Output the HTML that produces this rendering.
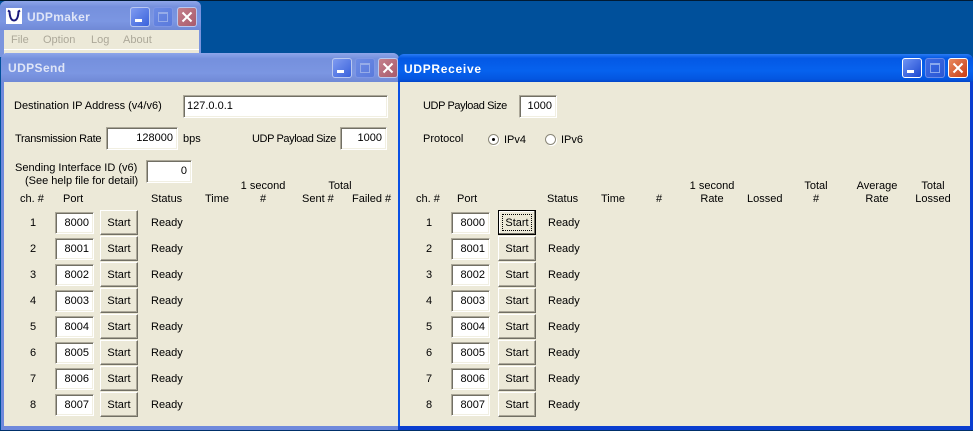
<!DOCTYPE html>
<html><head><meta charset="utf-8">
<style>
html,body{margin:0;padding:0;width:973px;height:431px;overflow:hidden;background:#00509b}
body{position:relative;font:11px/13px "Liberation Sans",sans-serif;color:#000}
div,span{position:absolute;box-sizing:border-box}
span{white-space:nowrap;margin-top:4px}
.c{transform:translateX(-50%)}
.in{background:#fff;border:1px solid;border-color:#aca899 #fff #fff #aca899;box-shadow:inset 1px 1px 0 #716f64,inset -1px -1px 0 #f1efe2;text-align:right;padding:3px 4px 0 0;line-height:14px}
.p{width:39px;height:22px;font-size:11px}
.b{width:38px;height:25px;background:#ece9d8;border:1px solid;border-color:#fff #716f64 #716f64 #fff;box-shadow:inset -1px -1px 0 #aca899;text-align:center;line-height:25px}
.t{color:#fff;font-weight:bold;font-size:12px;line-height:14px;margin-top:0}
.m{color:#aca899;margin-top:1px}
.u{letter-spacing:-.4px}
.wb{width:20px;height:20px;border:1px solid #fff;border-radius:3px}
.ia{border-color:#b9c8f0}
.min{background:linear-gradient(135deg,#7f9bf0,#3a62dc)}
.max{background:linear-gradient(135deg,#6c8be4,#5a7adc);border-color:#7e96e4}
.cl{background:linear-gradient(135deg,#c4808c,#a85a6c)}
.amin{background:linear-gradient(135deg,#6f94f4,#1c48d0)}
.amax{background:linear-gradient(135deg,#3d6ae4,#2b58d4);border-color:#6a8ce8}
.acl{background:linear-gradient(135deg,#e88a60,#c83c14)}
.r{width:11px;height:11px;border-radius:50%;background:#fff;border:1px solid #8a8778;box-shadow:1px 1px 0 #fff}
</style></head><body>
<div style="left:0;top:0;width:973px;height:1px;background:#001a33"></div>

<!-- UDPmaker -->
<div style="left:0;top:1px;width:201px;height:56px;background:#7b95de;border-radius:6px 6px 0 0"></div>
<div style="left:0;top:1px;width:201px;height:29px;background:linear-gradient(180deg,#8ea6ea 0,#7590dd 20%,#7b96e2 70%,#7089d6 100%);border-radius:6px 6px 0 0"></div>
<div style="left:4px;top:30px;width:195px;height:24px;background:#ece9d8"></div>
<div style="left:4px;top:49px;width:195px;height:1px;background:#fff"></div>
<div style="left:6px;top:8px;width:16px;height:16px;background:#fff"></div>
<svg style="position:absolute;left:6px;top:8px" width="16" height="16"><path d="M2 2.500 L3.500 3.500 Q4 12.500 8 12.500 Q12 12.500 12.500 3.500 L14 2.500" fill="none" stroke="#1a1a7c" stroke-width="2"/></svg>
<span class="t" style="left:27px;top:10px;color:#dfe5f7;letter-spacing:.3px">UDPmaker</span>
<span class="m" style="left:11px;top:33px">File</span>
<span class="m" style="left:43px;top:33px">Option</span>
<span class="m" style="left:91px;top:33px">Log</span>
<span class="m" style="left:123px;top:33px">About</span>
<div class="wb ia min" style="left:130px;top:7px"><div style="left:4px;top:11px;width:7px;height:3px;background:#fff"></div></div>
<div class="wb ia max" style="left:153px;top:7px"><div style="left:4px;top:4px;width:10px;height:10px;border:1px solid #96ace8;border-top-width:2px"></div></div>
<div class="wb ia cl" style="left:177px;top:7px"><svg style="position:absolute;left:3px;top:3px" width="12" height="12"><path d="M1.500 1.500L10.500 10.500M10.500 1.500L1.500 10.500" stroke="#fff" stroke-width="2"/></svg></div>

<!-- UDPSend window -->
<div style="left:1px;top:53px;width:398px;height:377px;background:#6f89dc;border-radius:6px 6px 0 0"></div>
<div style="left:1px;top:53px;width:398px;height:29px;background:linear-gradient(180deg,#8ea6ea 0,#7590dd 20%,#7b96e2 70%,#7089d6 100%);border-radius:6px 6px 0 0"></div>
<div style="left:4px;top:82px;width:394px;height:344px;background:#ece9d8"></div>
<span class="t" style="left:8px;top:61px;color:#dfe5f7;letter-spacing:.4px">UDPSend</span>
<div class="wb ia min" style="left:332px;top:58px"><div style="left:4px;top:11px;width:7px;height:3px;background:#fff"></div></div>
<div class="wb ia max" style="left:355px;top:58px"><div style="left:4px;top:4px;width:10px;height:10px;border:1px solid #96ace8;border-top-width:2px"></div></div>
<div class="wb ia cl" style="left:378px;top:58px"><svg style="position:absolute;left:3px;top:3px" width="12" height="12"><path d="M1.500 1.500L10.500 10.500M10.500 1.500L1.500 10.500" stroke="#fff" stroke-width="2"/></svg></div>

<span style="left:14px;top:96px">Destination IP Address (v4/v6)</span>
<div class="in" style="left:183px;top:95px;width:205px;height:23px;text-align:left;padding:3px 0 0 3px">127.0.0.1</div>
<span class="u" style="left:15px;top:129px;letter-spacing:-.3px">Transmission Rate</span>
<div class="in" style="left:106px;top:127px;width:72px;height:23px">128000</div>
<span style="left:183px;top:129px">bps</span>
<span class="u" style="left:252px;top:129px">UDP Payload Size</span>
<div class="in" style="left:340px;top:127px;width:47px;height:23px">1000</div>
<span style="left:15px;top:158px">Sending Interface ID (v6)</span>
<span style="left:25px;top:171px">(See help file for detail)</span>
<div class="in" style="left:146px;top:160px;width:46px;height:23px">0</div>

<span style="left:20px;top:189px">ch. #</span>
<span style="left:63px;top:189px">Port</span>
<span style="left:151px;top:189px">Status</span>
<span style="left:205px;top:189px">Time</span>
<span class="c" style="left:263px;top:176px">1 second</span>
<span class="c" style="left:263px;top:189px">#</span>
<span class="c" style="left:340px;top:176px">Total</span>
<span style="left:302px;top:189px">Sent #</span>
<span style="left:352px;top:189px">Failed #</span>

<span class="c" style="left:33px;top:213px">1</span><div class="in p" style="left:55px;top:212px">8000</div><div class="b" style="left:100px;top:210px">Start</div><span style="left:151px;top:213px">Ready</span>
<span class="c" style="left:33px;top:239px">2</span><div class="in p" style="left:55px;top:238px">8001</div><div class="b" style="left:100px;top:236px">Start</div><span style="left:151px;top:239px">Ready</span>
<span class="c" style="left:33px;top:265px">3</span><div class="in p" style="left:55px;top:264px">8002</div><div class="b" style="left:100px;top:262px">Start</div><span style="left:151px;top:265px">Ready</span>
<span class="c" style="left:33px;top:291px">4</span><div class="in p" style="left:55px;top:290px">8003</div><div class="b" style="left:100px;top:288px">Start</div><span style="left:151px;top:291px">Ready</span>
<span class="c" style="left:33px;top:317px">5</span><div class="in p" style="left:55px;top:316px">8004</div><div class="b" style="left:100px;top:314px">Start</div><span style="left:151px;top:317px">Ready</span>
<span class="c" style="left:33px;top:343px">6</span><div class="in p" style="left:55px;top:342px">8005</div><div class="b" style="left:100px;top:340px">Start</div><span style="left:151px;top:343px">Ready</span>
<span class="c" style="left:33px;top:369px">7</span><div class="in p" style="left:55px;top:368px">8006</div><div class="b" style="left:100px;top:366px">Start</div><span style="left:151px;top:369px">Ready</span>
<span class="c" style="left:33px;top:395px">8</span><div class="in p" style="left:55px;top:394px">8007</div><div class="b" style="left:100px;top:392px">Start</div><span style="left:151px;top:395px">Ready</span>

<!-- UDPReceive window -->
<div style="left:398px;top:54px;width:575px;height:376px;background:#0a3ed0;border-radius:6px 6px 0 0"></div>
<div style="left:398px;top:54px;width:575px;height:28px;background:linear-gradient(180deg,#2a7cf4 0,#0458e4 15%,#0662ee 60%,#0456e0 90%,#0344c8 100%);border-radius:6px 6px 0 0"></div>
<div style="left:400px;top:82px;width:570px;height:344px;background:#ece9d8"></div>
<div style="left:398px;top:82px;width:2px;height:344px;background:#0a50e4"></div>
<span class="t" style="left:404px;top:62px;letter-spacing:.7px">UDPReceive</span>
<div class="wb amin" style="left:902px;top:58px"><div style="left:4px;top:11px;width:7px;height:3px;background:#fff"></div></div>
<div class="wb amax" style="left:925px;top:58px"><div style="left:4px;top:4px;width:10px;height:10px;border:1px solid #8aa8ee;border-top-width:2px"></div></div>
<div class="wb acl" style="left:948px;top:58px"><svg style="position:absolute;left:3px;top:3px" width="12" height="12"><path d="M1.500 1.500L10.500 10.500M10.500 1.500L1.500 10.500" stroke="#fff" stroke-width="2"/></svg></div>

<span class="u" style="left:423px;top:96px">UDP Payload Size</span>
<div class="in" style="left:519px;top:95px;width:38px;height:23px">1000</div>
<span style="left:423px;top:129px">Protocol</span>
<div class="r" style="left:488px;top:134px"><div style="left:3px;top:3px;width:3px;height:3px;background:#000;border-radius:50%"></div></div>
<span style="left:504px;top:130px">IPv4</span>
<div class="r" style="left:545px;top:134px"></div>
<span style="left:561px;top:130px">IPv6</span>

<span style="left:416px;top:189px">ch. #</span>
<span style="left:457px;top:189px">Port</span>
<span style="left:547px;top:189px">Status</span>
<span style="left:601px;top:189px">Time</span>
<span class="c" style="left:659px;top:189px">#</span>
<span class="c" style="left:712px;top:176px">1 second</span>
<span class="c" style="left:712px;top:189px">Rate</span>
<span style="left:747px;top:189px">Lossed</span>
<span class="c" style="left:816px;top:176px">Total</span>
<span class="c" style="left:816px;top:189px">#</span>
<span class="c" style="left:877px;top:176px">Average</span>
<span class="c" style="left:877px;top:189px">Rate</span>
<span class="c" style="left:933px;top:176px">Total</span>
<span class="c" style="left:933px;top:189px">Lossed</span>

<span class="c" style="left:429px;top:213px">1</span><div class="in p" style="left:451px;top:212px">8000</div><div class="b" style="left:498px;top:210px;border:1px solid #000;box-shadow:inset -1px -1px 0 #716f64,inset 1px 1px 0 #fff">Start<div style="left:3px;top:3px;width:30px;height:17px;border:1px dotted #000"></div></div><span style="left:548px;top:213px">Ready</span>
<span class="c" style="left:429px;top:239px">2</span><div class="in p" style="left:451px;top:238px">8001</div><div class="b" style="left:498px;top:236px">Start</div><span style="left:548px;top:239px">Ready</span>
<span class="c" style="left:429px;top:265px">3</span><div class="in p" style="left:451px;top:264px">8002</div><div class="b" style="left:498px;top:262px">Start</div><span style="left:548px;top:265px">Ready</span>
<span class="c" style="left:429px;top:291px">4</span><div class="in p" style="left:451px;top:290px">8003</div><div class="b" style="left:498px;top:288px">Start</div><span style="left:548px;top:291px">Ready</span>
<span class="c" style="left:429px;top:317px">5</span><div class="in p" style="left:451px;top:316px">8004</div><div class="b" style="left:498px;top:314px">Start</div><span style="left:548px;top:317px">Ready</span>
<span class="c" style="left:429px;top:343px">6</span><div class="in p" style="left:451px;top:342px">8005</div><div class="b" style="left:498px;top:340px">Start</div><span style="left:548px;top:343px">Ready</span>
<span class="c" style="left:429px;top:369px">7</span><div class="in p" style="left:451px;top:368px">8006</div><div class="b" style="left:498px;top:366px">Start</div><span style="left:548px;top:369px">Ready</span>
<span class="c" style="left:429px;top:395px">8</span><div class="in p" style="left:451px;top:394px">8007</div><div class="b" style="left:498px;top:392px">Start</div><span style="left:548px;top:395px">Ready</span>

<div style="left:0;top:430px;width:973px;height:1px;background:#00306a"></div>
</body></html>
